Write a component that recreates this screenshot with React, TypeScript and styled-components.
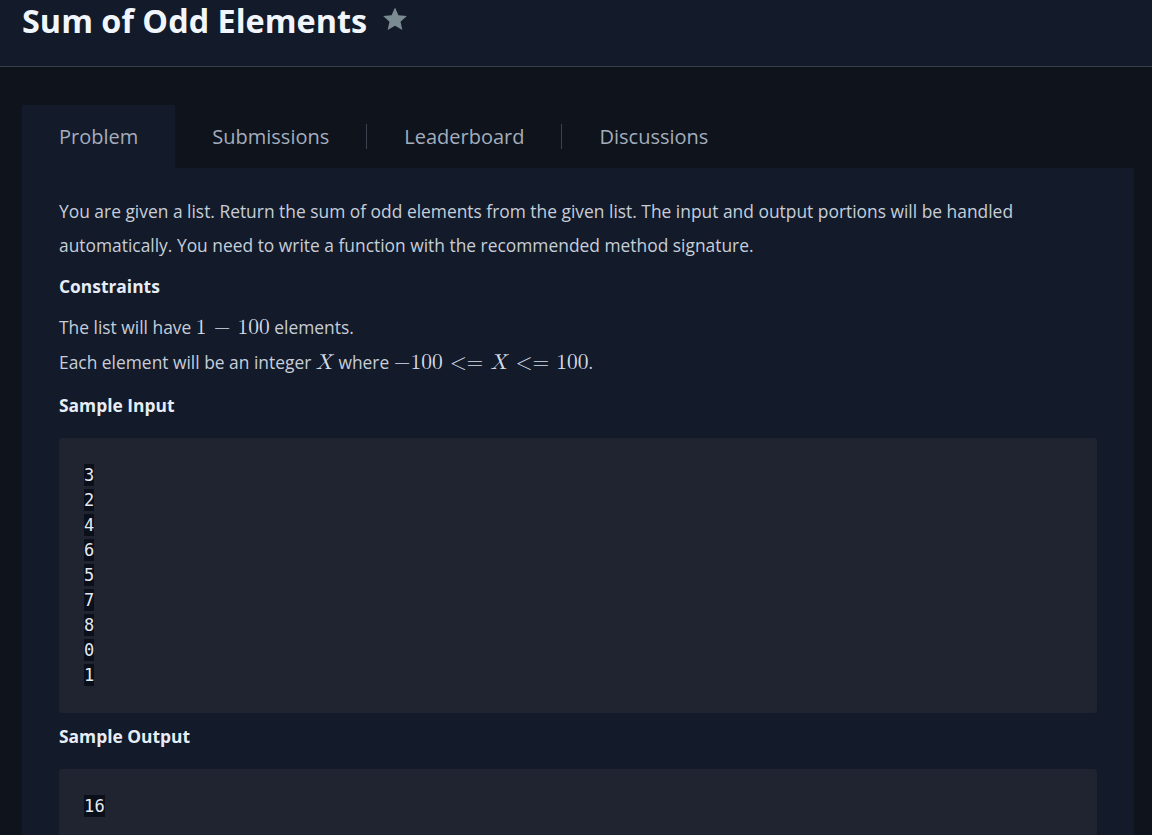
import React from "react";
import styled, { createGlobalStyle } from "styled-components";

const GlobalStyle = createGlobalStyle`
  html, body {
    margin: 0;
    padding: 0;
    background: #0e131c;
    font-family: "Open Sans", "Noto Sans", sans-serif;
    overflow: hidden;
  }
  * { box-sizing: border-box; }
`;

const Page = styled.div`
  width: 1152px;
  height: 835px;
  background: #0e131c;
  overflow: hidden;
`;

const Header = styled.header`
  height: 67px;
  background: #131a29;
  border-bottom: 1px solid #3a3f4a;
  display: flex;
  align-items: flex-start;
  padding: 2px 22px 0;
  gap: 14px;
`;

const Title = styled.h1`
  margin: 0;
  font-size: 32.4px;
  line-height: 36px;
  font-weight: 700;
  color: #f1f5fc;
`;

const StarIcon = styled.svg`
  width: 28px;
  height: 28px;
  margin-top: 3px;
  fill: #7a8c91;
`;

const Main = styled.main`
  padding: 38px 18px 0 22px;
`;

const TabBar = styled.nav`
  display: flex;
  align-items: center;
  height: 63px;
`;

const Tab = styled.div<{ $active?: boolean }>`
  height: 100%;
  display: flex;
  align-items: center;
  padding: 0 37px;
  font-size: 20px;
  color: #a3adbd;
  background: ${(p) => (p.$active ? "#131a29" : "transparent")};
`;

const Separator = styled.span`
  width: 1px;
  height: 25px;
  background: #3b4250;
`;

const Panel = styled.section`
  background: #131a29;
  padding: 26px 37px 40px 37px;
  min-height: 700px;
`;

const Paragraph = styled.p`
  margin: 0;
  font-size: 17.4px;
  line-height: 34px;
  color: #c6ceda;
`;

const Heading = styled.h3<{ $top?: number }>`
  margin: ${(p) => p.$top ?? 12}px 0 12px;
  font-size: 17.4px;
  line-height: 24px;
  font-weight: 700;
  color: #e6edf7;
`;

const Line = styled.div`
  font-size: 17.4px;
  line-height: 35px;
  color: #c6ceda;
`;

const Math = styled.span<{ $italic?: boolean }>`
  font-family: "Latin Modern Math", "Liberation Serif", "DejaVu Serif", serif;
  font-size: 21.5px;
  font-style: ${(p) => (p.$italic ? "italic" : "normal")};
  margin-right: ${(p) => (p.$italic ? "2px" : "0")};
  color: #d4dbe6;
`;

const CodeBox = styled.pre`
  margin: 21px 0 11px;
  background: #1f2430;
  border-radius: 3px;
  padding: 24px 25px 26px;
  font-family: "DejaVu Sans Mono", "Liberation Mono", monospace;
  font-size: 17px;
  line-height: 25px;
  color: #e3eaf3;
`;

const CodeRow = styled.div`
  height: 25px;
  display: flex;
  align-items: center;
`;

const Code = styled.code`
  display: inline-block;
  background: #0a0f19;
  height: 22px;
  line-height: 22px;
  font-family: inherit;
  letter-spacing: 0.2px;
`;

const inputLines = ["3", "2", "4", "6", "5", "7", "8", "0", "1"];

export default function App() {
  return (
    <Page>
      <GlobalStyle />
      <Header>
        <Title>Sum of Odd Elements</Title>
        <StarIcon viewBox="0 0 24 24">
          <path d="M12 2.2l2.95 6.6 7.2.7-5.42 4.8 1.6 7.06L12 17.7l-6.33 3.66 1.6-7.06L1.85 9.5l7.2-.7z" />
        </StarIcon>
      </Header>
      <Main>
        <TabBar>
          <Tab $active>Problem</Tab>
          <Tab>Submissions</Tab>
          <Separator />
          <Tab>Leaderboard</Tab>
          <Separator />
          <Tab>Discussions</Tab>
        </TabBar>
        <Panel>
          <Paragraph>
            You are given a list. Return the sum of odd elements from the given list. The input and output portions will be handled
            automatically. You need to write a function with the recommended method signature.
          </Paragraph>
          <Heading>Constraints</Heading>
          <Line>
            The list will have <Math>1 − 100</Math> elements.
          </Line>
          <Line>
            Each element will be an integer <Math $italic>X</Math> where{" "}
            <Math>
              −100 &lt;= <Math $italic>X</Math> &lt;= 100
            </Math>
            .
          </Line>
          <Heading $top={13}>Sample Input</Heading>
          <CodeBox>
            {inputLines.map((n, i) => (
              <CodeRow key={i}>
                <Code>{n}</Code>
              </CodeRow>
            ))}
          </CodeBox>
          <Heading $top={0}>Sample Output</Heading>
          <CodeBox>
            <CodeRow>
              <Code>16</Code>
            </CodeRow>
          </CodeBox>
        </Panel>
      </Main>
    </Page>
  );
}
